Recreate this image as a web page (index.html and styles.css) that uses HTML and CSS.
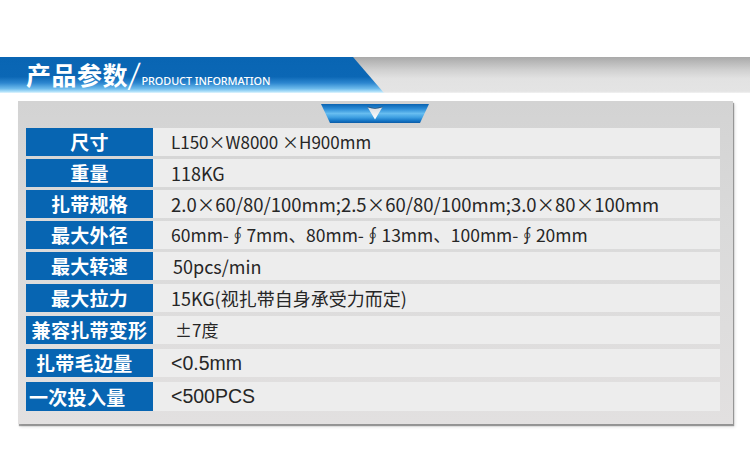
FILE: index.html
```html
<!DOCTYPE html>
<html lang="zh-CN">
<head>
<meta charset="utf-8">
<title>产品参数</title>
<link rel="stylesheet" href="styles.css">
</head>
<body>
<header class="band">
  <div class="band-blue">
    <h1 class="title">产品参数<span class="slash">/</span><span class="en">PRODUCT INFORMATION</span></h1>
  </div>
</header>
<section class="panel">
  <div class="tab">
    <svg class="tab-arrow" width="16" height="14" viewBox="0 0 16 14">
      <defs>
        <linearGradient id="ag" x1="0" y1="0" x2="0" y2="1">
          <stop offset="0" stop-color="#d9dde2"/>
          <stop offset="1" stop-color="#ffffff"/>
        </linearGradient>
      </defs>
      <path d="M0.5 1 Q8 4 15.5 1 L8 13.5 Z" fill="url(#ag)"/>
      <path d="M0.5 1 Q8 4 15.5 1" fill="none" stroke="#2a4a6a" stroke-width="1" opacity="0.7"/>
    </svg>
  </div>
  <div class="specs">
    <div class="label">尺寸</div><div class="value value-sm">L150×W8000 ×H900mm</div>
    <div class="label">重量</div><div class="value">118KG</div>
    <div class="label">扎带规格</div><div class="value value-lg">2.0×60/80/100mm;2.5×60/80/100mm;3.0×80×100mm</div>
    <div class="label">最大外径</div><div class="value value-md">60mm-∮7mm、80mm-∮13mm、100mm-∮20mm</div>
    <div class="label">最大转速</div><div class="value value-indent">50pcs/min</div>
    <div class="label">最大拉力</div><div class="value">15KG(视扎带自身承受力而定)</div>
    <div class="label">兼容扎带变形</div><div class="value value-sm value-indent2">±7度</div>
    <div class="label label-shift">扎带毛边量</div><div class="value value-arial">&lt;0.5mm</div>
    <div class="label label-left last">一次投入量</div><div class="value value-arial last">&lt;500PCS</div>
  </div>
</section>
</body>
</html>
```
FILE: styles.css
```css
* { box-sizing: border-box; }
html, body { margin: 0; padding: 0; background: #ffffff; }
body {
  width: 750px;
  height: 458px;
  overflow: hidden;
  font-family: "Noto Sans CJK SC", "Noto Sans", sans-serif;
}
.band {
  margin-top: 57px;
  height: 36px;
  background: linear-gradient(to bottom, #a9a9a9 0%, #cfcfcf 35%, #e2e2e2 60%, #e4e4e4 95%, #f2f2f2 100%);
}
.band-blue {
  width: 384px;
  height: 36px;
  clip-path: polygon(0 0, 353px 0, 384px 100%, 0 100%);
  background: linear-gradient(to bottom, #0965b3 0%, #0b67b5 55%, #2c86cf 72%, #6dbbec 88%, #b8e5fb 97%, #e8f6fd 100%);
  padding-left: 26px;
  padding-top: 3px;
  display: flex;
  align-items: center;
}
.title {
  margin: 0;
  color: #ffffff;
  font-family: "Noto Sans CJK SC", sans-serif;
  font-weight: 700;
  font-size: 25px;
  line-height: 33px;
  letter-spacing: 0.5px;
  white-space: nowrap;
}
.slash {
  font-weight: 400;
  font-size: 28px;
  margin: 0 1px 0 1px;
  display: inline-block;
  transform: skewX(-6deg);
}
.en {
  font-family: "Noto Sans", sans-serif;
  font-weight: 500;
  font-size: 10.9px;
  letter-spacing: -0.1px;
}
.panel {
  margin: 8px 0 0 18px;
  width: 715px;
  height: 323px;
  padding: 3px 13px 13px 8px;
  background: linear-gradient(to bottom, #d3d3d3 0%, #dadada 40%, #e2e0e0 100%);
  box-shadow: 1px 2px 1px rgba(0, 0, 0, 0.35), 2px 3px 3px rgba(0, 0, 0, 0.12);
}
.tab {
  margin-left: 295px;
  width: 108px;
  height: 19px;
  clip-path: polygon(0 0, 100% 0, 99px 100%, 9px 100%);
  background: linear-gradient(to bottom, #0a63b1 0%, #2a8bd6 25%, #67bdf0 50%, #3fa0e2 70%, #1576c6 88%, #0a5aa6 100%);
  display: flex;
  justify-content: center;
  align-items: flex-start;
  padding-top: 1.5px;
}
.tab-arrow { display: block; }
.specs {
  margin-top: 5px;
  display: grid;
  grid-template-columns: 127px 1fr;
  grid-template-rows: 28px 28px 28px 28px 29px 29px 30px 30px 29px;
  row-gap: 3px;
  align-items: start;
}
.label {
  height: 28px;
  background: #0765b2;
  color: #ffffff;
  font-weight: 700;
  font-size: 19px;
  line-height: 28px;
  text-align: center;
  white-space: nowrap;
  letter-spacing: 0.3px;
}
.label-shift { text-align: left; padding-left: 10px; }
.label-left { text-align: left; padding-left: 3px; }
.value {
  height: 28px;
  background: #ededed;
  color: #262626;
  font-size: 18px;
  line-height: 28px;
  padding-left: 18px;
  white-space: nowrap;
}
.last { height: 29px; line-height: 29px; }
.value-sm { font-size: 17px; }
.value-md { font-size: 17.5px; }
.value-lg { font-size: 18.5px; }
.value-indent { padding-left: 20px; }
.value-indent2 { padding-left: 22px; }
.value-arial {
  font-family: "Liberation Sans", Arial, sans-serif;
  font-size: 19.5px;
}
```
